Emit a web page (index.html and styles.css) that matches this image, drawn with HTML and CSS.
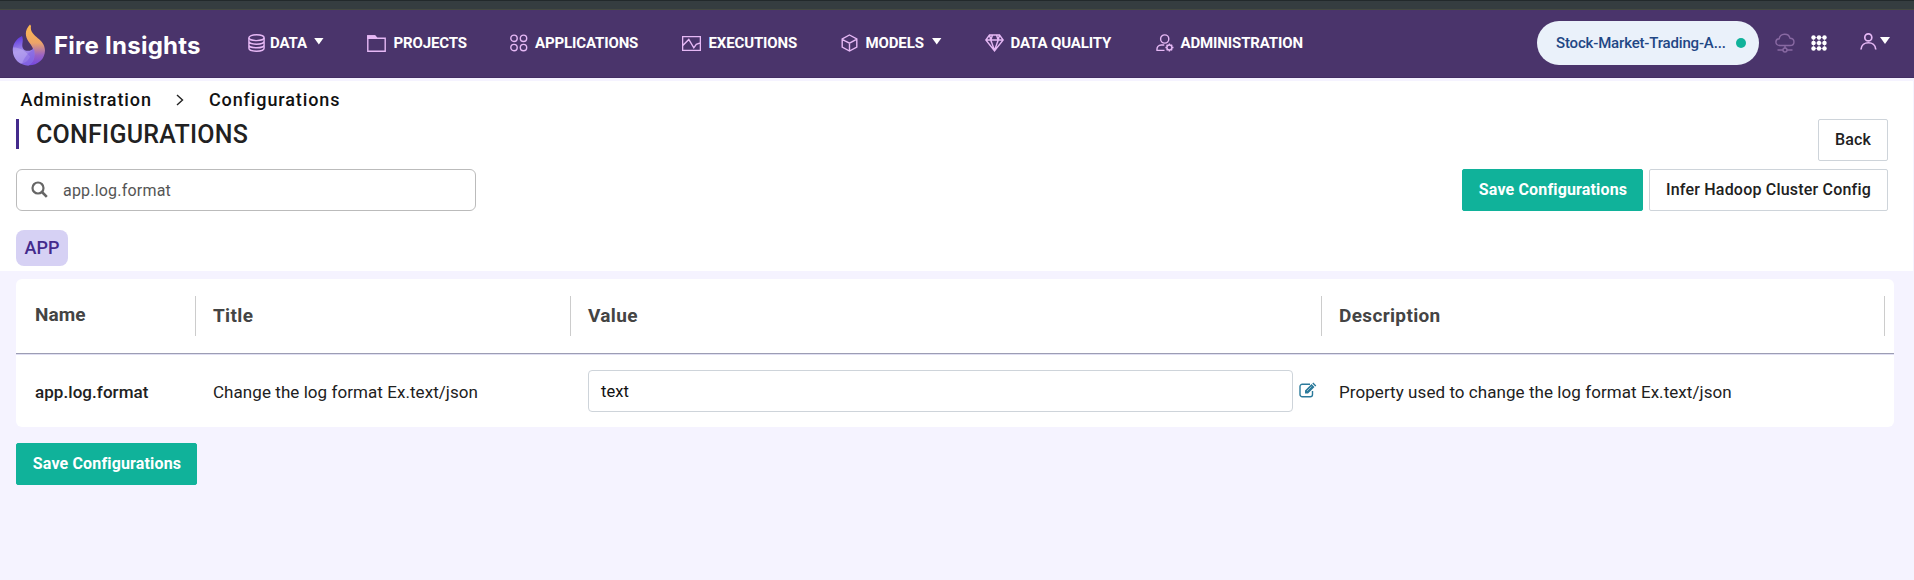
FILE: index.html
```
<!DOCTYPE html>
<html lang="en">
<head>
<meta charset="utf-8">
<title>Fire Insights</title>
<link rel="stylesheet" href="styles.css">
</head>
<body>
<div class="strip"></div>
<header class="header">
  <a class="brand">
    <svg class="brand-mark" viewBox="0 0 34 42" width="34" height="42">
      <defs>
        <linearGradient id="flame" x1="0" y1="0" x2="0" y2="1"><stop offset="0" stop-color="#ffb94e"/><stop offset=".45" stop-color="#eca468"/><stop offset=".75" stop-color="#9a62c4"/><stop offset="1" stop-color="#7348e0"/></linearGradient>
        <linearGradient id="drop" x1=".3" y1="0" x2=".5" y2="1"><stop offset="0" stop-color="#5b35e0"/><stop offset=".5" stop-color="#a18ae8"/><stop offset="1" stop-color="#8566e4"/></linearGradient>
      </defs>
      <path d="M18 .5c-5 5-5.500 11-1.500 17 4 5 6 9 5 14-1 5-4 8-8 9.500C24 43 33 36 33 26.500 33 14 17 13 19 2z" fill="url(#flame)"/>
      <path d="M10 12C4 15 .8 20 .8 26c0 9 7 15.500 15.700 15.500 5-2 7.500-9 5.300-17.500-2 3.500-9.500 4-11 0-1.500-4 1.200-7-.8-12z" fill="url(#drop)"/>
      <path d="M1 23.500c7 0 11 2.500 17 9-1.500 4-5 7-9.500 7C3 37 0 30 1 23.500z" fill="#c5b5f4" opacity=".45"/>
      <path d="M22 25c-5 3-10 8-12 15l6.500 1.500C21 39 23.500 32 22 25z" fill="#7c5be0" opacity=".45"/>
    </svg>
    <span class="brand-name">Fire Insights</span>
  </a>
  <nav class="nav">
    <a class="item data"><svg class="ico" width="17" height="18" viewBox="0 0 17 18"><ellipse cx="8.500" cy="3.700" rx="7.600" ry="2.900"/><path d="M.9 3.700v10.600c0 1.600 3.400 2.900 7.600 2.900s7.600-1.300 7.600-2.900V3.700M.9 7.300c0 1.600 3.400 2.900 7.600 2.900s7.600-1.300 7.600-2.900M.9 10.900c0 1.600 3.400 2.900 7.600 2.900s7.600-1.300 7.600-2.900"/></svg><span>DATA</span><i class="caret"></i></a>
    <a class="item projects"><svg class="ico" width="19" height="17" viewBox="0 0 19 17"><path d="M.8 15.400V1h7l2 2.200h8.400v13H.8z"/><path d="M.8 1h7l2 2.200H.8z" fill="#e6b8f5"/></svg><span>PROJECTS</span></a>
    <a class="item apps"><svg class="ico" width="18" height="18" viewBox="0 0 18 18"><circle cx="4" cy="4.300" r="3.200"/><circle cx="13.500" cy="4.300" r="3.200"/><circle cx="4" cy="13.600" r="3.200"/><circle cx="13.500" cy="13.600" r="3.200"/></svg><span>APPLICATIONS</span></a>
    <a class="item execs"><svg class="ico" width="19" height="15" viewBox="0 0 19 15"><path d="M.6.600h17.800v13.800H.6zM.8 9.500l6-6 5 8.300 2.500-3.500 4-1.500" /></svg><span>EXECUTIONS</span></a>
    <a class="item models"><svg class="ico" width="17" height="18" viewBox="0 0 17 18"><path d="M8.500 1l7.300 4v8.200L8.500 17l-7.300-3.800V5zM4 6.800l4.500 2.400 7-3.800M8.500 9.200V17M4 6.800L1.300 5.300"/></svg><span>MODELS</span><i class="caret"></i></a>
    <a class="item quality"><svg class="ico" width="19" height="18" viewBox="0 0 19 18"><path d="M4.500 1h10l3.700 5L9.500 16.800.8 6zM.8 6h17.400M5.800 6l3.700 10.500L13.200 6M4.500 1l1.300 5 1.700-5M14.500 1l-1.300 5-1.700-5"/></svg><span>DATA QUALITY</span></a>
    <a class="item admin"><svg class="ico" width="18" height="18" viewBox="0 0 18 18"><circle cx="8.700" cy="5" r="4.100"/><path d="M8.500 16.400H1c-.4-3.400 1.500-5.400 4.300-5.400h3"/><circle cx="13.400" cy="13.500" r="2.500"/><path d="M13.400 9.500v1.600M13.400 15.900v1.600M9.400 13.500H11M15.800 13.500h1.700M10.600 10.700l1.200 1.200M15 15.200l1.200 1.100M16.200 10.700L15 11.900M11.800 15.200l-1.200 1.100"/></svg><span>ADMINISTRATION</span></a>
  </nav>
  <div class="tools">
    <div class="pill"><span>Stock-Market-Trading-A...</span><i class="dot"></i></div>
    <svg class="ico cloud" width="20" height="20" viewBox="0 0 20 20"><path d="M5 12.500C-.3 12.300-.3 6.200 4.200 5.800 5 .2 13.500-.5 15 5.200c5.300.3 5.300 7.100 0 7.300zM10 12.500v3M2.500 17H8M12 17h5.500"/><circle cx="10" cy="17" r="2"/></svg>
    <svg class="grid" width="16" height="16" viewBox="0 0 16 16" fill="#fff"><path d="M2.500 2.500h11v11h-11zM8 2.500v11M2.500 8h11" fill="none" stroke="#fff" stroke-opacity=".5"/><circle cx="2.500" cy="2.500" r="2.200"/><circle cx="8" cy="2.500" r="2.200"/><circle cx="13.500" cy="2.500" r="2.200"/><circle cx="2.500" cy="8" r="2.200"/><circle cx="8" cy="8" r="2.200"/><circle cx="13.500" cy="8" r="2.200"/><circle cx="2.500" cy="13.500" r="2.200"/><circle cx="8" cy="13.500" r="2.200"/><circle cx="13.500" cy="13.500" r="2.200"/></svg>
    <svg class="ico user" width="17" height="17" viewBox="0 0 17 17"><circle cx="8.300" cy="4.400" r="3.500"/><path d="M1 16.500c.6-9 14.200-9 14.800 0"/></svg>
    <i class="caret"></i>
  </div>
</header>
<main>
  <section class="top">
    <div class="crumbs"><span>Administration</span><svg width="8" height="12" viewBox="0 0 8 12"><path d="M1 1l5.500 5L1 11" fill="none" stroke="#222" stroke-width="1.400"/></svg><span>Configurations</span></div>
    <div class="row title-row"><h1>CONFIGURATIONS</h1><button class="btn back">Back</button></div>
    <div class="row search-row">
      <div class="search"><svg width="17" height="17" viewBox="0 0 17 17"><circle cx="7" cy="7" r="5.500" fill="none" stroke="#666" stroke-width="2.200"/><path d="M11 11l4.800 4.800" stroke="#666" stroke-width="2.600"/></svg><span>app.log.format</span></div>
      <div class="actions"><button class="btn save">Save Configurations</button><button class="btn infer">Infer Hadoop Cluster Config</button></div>
    </div>
    <span class="tab">APP</span>
  </section>
  <section class="card">
    <div class="cols head"><div class="name">Name</div><div>Title</div><div>Value</div><div>Description</div></div>
    <div class="cols body">
      <div class="key">app.log.format</div>
      <div>Change the log format Ex.text/json</div>
      <div class="value"><span class="field">text</span><svg width="18" height="16" viewBox="0 0 18 16"><path d="M13.500 9v3.500a2.300 2.300 0 0 1-2.300 2.300H3.300A2.300 2.300 0 0 1 1 12.500v-8a2.300 2.300 0 0 1 2.300-2.300H11" fill="none" stroke="#2b7a9b" stroke-width="1.400"/><path d="M6 8.500L12.500 2l3 3L9 11.500H6zM13.300 1.500l1-1 3 3-1 1z" fill="#2b7a9b"/><path d="M8 9l4.500-4.500" stroke="#fff" stroke-width=".5"/></svg></div>
      <div>Property used to change the log format Ex.text/json</div>
    </div>
  </section>
  <button class="btn save bottom">Save Configurations</button>
</main>
</body>
</html>
```
FILE: styles.css
```
* { box-sizing: border-box; }
body { margin: 0; height: 580px; overflow: hidden; background: #f5f3ff; font: 16px/24px Roboto, sans-serif; color: #212121; }
.strip { height: 10px; background: #353d40; border-top: 1px solid #22292b; border-bottom: 1px solid #444940; }
.header { height: 68px; background: #4a346b; border-bottom: 1px solid #432d63; display: flex; }
.brand { display: flex; width: 248px; padding: 14px 0 0 12px; }
.brand-mark { flex: none; }
.brand-name { margin: 7px 0 0 8px; font: 700 24px/30px Inter, sans-serif; color: #fff; white-space: nowrap; letter-spacing: .25px; }
.nav { display: flex; flex: 1; padding-top: 23px; }
.item { display: flex; align-items: center; height: 20px; flex: none; color: #fff; font-weight: 700; font-size: 15px; line-height: 20px; letter-spacing: -.13px; white-space: nowrap; }
.item span { margin-left: 7.500px; }
.ico { fill: none; stroke: #e6b8f5; stroke-width: 1.400; flex: none; }
.caret { width: 10px; height: 7px; background: #fff; clip-path: polygon(0 0, 100% 0, 50% 100%); flex: none; }
.data { width: 119px; }
.data span { margin-left: 5px; }
.item .caret { margin: -4px 0 0 7px; }
.projects { width: 143px; }
.apps { width: 172px; }
.apps span { margin-left: 7px; }
.execs { width: 159px; }
.models { width: 144px; }
.models .caret { margin-left: 8px; }
.quality { width: 171px; }
.quality span, .admin span { margin-left: 6.500px; }
.tools { display: flex; align-items: center; height: 66px; width: 377px; }
.pill { width: 222px; height: 44px; border-radius: 22px; background: #eaf1fa; display: flex; align-items: center; justify-content: space-between; padding: 0 13px 0 19px; color: #1f4785; font-weight: 500; font-size: 15px; letter-spacing: -.17px; }
.dot { width: 10px; height: 10px; border-radius: 50%; background: #10b29a; }
.cloud { margin-left: 16px; opacity: .4; }
.grid { margin-left: 16px; }
.user { margin: -4px 0 0 33px; stroke-width: 1.700; }
.tools .caret { margin: -5px 0 0 3px; }
.top { height: 190px; margin: 3px 1px 0 0; padding: 7px 25px 0 16px; background: #fff; }
.crumbs { display: flex; align-items: center; padding-left: 4.500px; height: 24px; font-weight: 500; font-size: 18px; color: #111; letter-spacing: .9px; }
.crumbs svg { margin: 0 25px 0 24px; }
.row { display: flex; justify-content: space-between; align-items: flex-start; }
.title-row { height: 50px; margin-top: 7px; }
h1 { margin: 0; height: 30px; padding-left: 17px; border-left: 3px solid #432a8c; font-size: 25px; line-height: 32px; font-weight: 500; letter-spacing: .25px; }
.btn { height: 42px; padding: 0; border: 1px solid #ced4da; border-radius: 2px; background: #fff; font: 500 16px/24px Roboto, sans-serif; letter-spacing: .2px; color: #212121; white-space: nowrap; }
.back { width: 70px; }
.infer { width: 239px; }
.actions { display: flex; gap: 6px; }
.save { width: 181px; padding-left: 1px; background: #10b29a; border-color: #10b29a; color: #fff; font-weight: 700; letter-spacing: .15px; }
.search { width: 460px; height: 42px; border: 1px solid #bbb; border-radius: 6px; display: flex; align-items: center; padding-left: 14px; color: #555; letter-spacing: .2px; }
.search svg { margin-top: -2px; }
.search span { margin: 1px 0 0 15px; }
.tab { display: block; width: 52px; height: 36px; margin-top: 19px; border-radius: 8px; background: #d6d1f4; color: #432a8c; font-weight: 500; font-size: 18px; line-height: 36px; text-align: center; }
.card { width: 1878px; height: 148px; margin: 8px 0 16px 16px; border-radius: 6px; background: #fff; }
.cols { display: grid; grid-template-columns: 180px 375px 751px 563px; }
.head { height: 75px; padding-top: 17px; border-bottom: 1px solid #9c9db4; box-shadow: 0 1px #e0dff2; font-weight: 700; font-size: 19px; letter-spacing: .35px; color: #444; }
.head div { height: 40px; line-height: 40px; padding-left: 17px; border-right: 1px solid #ccc; }
.head .name, .body .key { padding-left: 19px; }
.head .name { line-height: 37px; letter-spacing: .1px; }
.body { align-items: center; height: 73px; padding-top: 1px; font-size: 17px; letter-spacing: .06px; }
.body > div { padding: 1px 0 0 17px; }
.body > .value { padding-top: 0; }
.key { font-weight: 500; }
.value { display: flex; align-items: center; }
.field { width: 705px; height: 42px; border: 1px solid #ced4da; border-radius: 4px; padding: 8px 12px; font-size: 16.500px; line-height: 26px; color: #111; }
.value svg { margin: -2px 0 0 6px; }
.bottom { display: block; margin-left: 16px; }
```
